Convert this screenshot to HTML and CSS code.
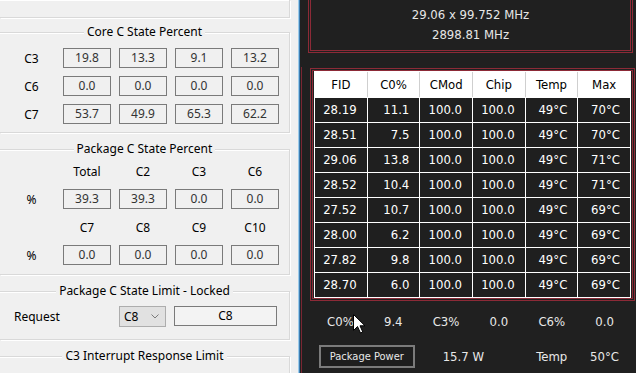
FILE: index.html
```html
<!DOCTYPE html>
<html>
<head>
<meta charset="utf-8">
<link rel="stylesheet" href="styles.css">
</head>
<body>
<div class="app">
  <div class="left">
    <div class="group group-top"></div>

    <div class="group core">
      <div class="gtitle">Core C State Percent</div>
      <div class="rows core-rows">
        <div class="vrow"><span class="lbl">C3</span><span class="box">19.8</span><span class="box">13.3</span><span class="box">9.1</span><span class="box">13.2</span></div>
        <div class="vrow"><span class="lbl">C6</span><span class="box">0.0</span><span class="box">0.0</span><span class="box">0.0</span><span class="box">0.0</span></div>
        <div class="vrow"><span class="lbl">C7</span><span class="box">53.7</span><span class="box">49.9</span><span class="box">65.3</span><span class="box">62.2</span></div>
      </div>
    </div>

    <div class="group pkg">
      <div class="gtitle">Package C State Percent</div>
      <div class="rows pkg-rows">
        <div class="hrow"><span class="lbl"></span><span class="hl">Total</span><span class="hl">C2</span><span class="hl">C3</span><span class="hl">C6</span></div>
        <div class="vrow sp9"><span class="lbl">%</span><span class="box">39.3</span><span class="box">39.3</span><span class="box">0.0</span><span class="box">0.0</span></div>
        <div class="hrow sp11"><span class="lbl"></span><span class="hl">C7</span><span class="hl">C8</span><span class="hl">C9</span><span class="hl">C10</span></div>
        <div class="vrow sp9"><span class="lbl">%</span><span class="box">0.0</span><span class="box">0.0</span><span class="box">0.0</span><span class="box">0.0</span></div>
      </div>
    </div>

    <div class="group limit">
      <div class="gtitle">Package C State Limit - Locked</div>
      <div class="rows limit-rows">
        <div class="lrow">
          <span class="req">Request</span>
          <span class="sel"><span>C8</span><svg class="chev" width="8" height="5" viewBox="0 0 8 5"><polyline points="0.5,0.5 4,4 7.5,0.5" fill="none" stroke="#7a7a7a" stroke-width="1"/></svg></span>
          <span class="tb">C8</span>
        </div>
      </div>
    </div>

    <div class="group irq">
      <div class="gtitle">C3 Interrupt Response Limit</div>
    </div>
  </div>

  <div class="sep"></div>

  <div class="right">
    <div class="freq">
      <div>29.06 x 99.752 MHz</div>
      <div>2898.81 MHz</div>
    </div>
    <div class="lower">
      <div class="tbox">
        <div class="grid">
          <div class="th">FID</div><div class="th">C0%</div><div class="th">CMod</div><div class="th">Chip</div><div class="th">Temp</div><div class="th last">Max</div>
          <div class="td">28.19</div><div class="td">11.1</div><div class="td">100.0</div><div class="td">100.0</div><div class="td">49°C</div><div class="td">70°C</div>
          <div class="td">28.51</div><div class="td">7.5</div><div class="td">100.0</div><div class="td">100.0</div><div class="td">49°C</div><div class="td">70°C</div>
          <div class="td">29.06</div><div class="td">13.8</div><div class="td">100.0</div><div class="td">100.0</div><div class="td">49°C</div><div class="td">71°C</div>
          <div class="td">28.52</div><div class="td">10.4</div><div class="td">100.0</div><div class="td">100.0</div><div class="td">49°C</div><div class="td">71°C</div>
          <div class="td">27.52</div><div class="td">10.7</div><div class="td">100.0</div><div class="td">100.0</div><div class="td">49°C</div><div class="td">69°C</div>
          <div class="td">28.00</div><div class="td">6.2</div><div class="td">100.0</div><div class="td">100.0</div><div class="td">49°C</div><div class="td">69°C</div>
          <div class="td">27.82</div><div class="td">9.8</div><div class="td">100.0</div><div class="td">100.0</div><div class="td">49°C</div><div class="td">69°C</div>
          <div class="td">28.70</div><div class="td">6.0</div><div class="td">100.0</div><div class="td">100.0</div><div class="td">49°C</div><div class="td">69°C</div>
        </div>
      </div>
      <div class="stats">
        <span>C0%</span><span>9.4</span><span>C3%</span><span>0.0</span><span>C6%</span><span>0.0</span>
      </div>
      <div class="btnrow">
        <span class="btn">Package Power</span>
        <span class="pw">15.7 W</span>
        <span class="tmp">Temp</span>
        <span class="tmp">50°C</span>
      </div>
    </div>
  </div>
</div>
<svg class="cursor" width="13" height="20" viewBox="0 0 13 20"><path d="M0.5,0.5 L0.5,16.5 L4.5,12.5 L7.5,19 L9.8,18 L7,11.8 L12,11.8 Z" fill="#fff" stroke="#000" stroke-width="1" stroke-linejoin="miter"/></svg>
</body>
</html>
```
FILE: styles.css
```css
* { box-sizing: border-box; }

body {
  margin: 0;
  width: 636px;
  height: 373px;
  overflow: hidden;
  background: #202020;
  position: relative;
}

.app {
  display: flex;
  height: 373px;
}

/* ---------- left (light) panel ---------- */
.left {
  width: 298px;
  flex: none;
  background: #f0f0f0;
  padding-right: 8px;
  font-family: "Noto Sans", "Liberation Sans", sans-serif;
  font-size: 12px;
  color: #000;
  overflow: hidden;
}

.group {
  border: 1px solid #d9d9d9;
  border-left: none;
  box-shadow: 1px 1px 0 #fff, inset 0 1px 0 #fff;
}

.group-top {
  height: 18px;
  border-top: none;
}

.core { margin-top: 14px; }
.pkg, .limit, .irq { margin-top: 16px; }
.irq { height: 40px; }

.gtitle {
  display: table;
  margin: -9px auto 0;
  padding: 0 3px;
  background: #f0f0f0;
  line-height: 16px;
  white-space: nowrap;
}

.rows { display: flex; flex-direction: column; }
.core-rows { padding: 8px 0; gap: 8px; }
.pkg-rows { padding: 7px 0 9px; }
.limit-rows { padding: 7px 0 13px; }

.sp9 { margin-top: 9px; }
.sp11 { margin-top: 11px; }

.vrow, .hrow {
  display: flex;
  align-items: center;
}
.vrow { height: 20px; }
.hrow { height: 16px; line-height: 16px; }

.lbl {
  width: 63px;
  text-align: center;
}

.box {
  width: 48px;
  height: 20px;
  border: 1px solid #7a7a7a;
  background: #f0f0f0;
  color: #333;
  text-align: center;
  line-height: 18px;
}
.box + .box, .hl + .hl { margin-left: 8px; }

.hl {
  width: 48px;
  text-align: center;
}

.lrow {
  display: flex;
  align-items: center;
  height: 20px;
  padding-left: 14px;
}
.req { width: 105px; }
.sel {
  width: 47px;
  height: 21px;
  border: 1px solid #adadad;
  background: #e1e1e1;
  display: flex;
  align-items: center;
  justify-content: space-between;
  padding: 0 6px 0 4px;
}
.tb {
  width: 103px;
  height: 20px;
  margin-left: 8px;
  border: 1px solid #7a7a7a;
  background: #f3f3f3;
  text-align: center;
  line-height: 18px;
}

/* ---------- separator ---------- */
.sep {
  width: 2px;
  flex: none;
  background: linear-gradient(to right, #9ccbea 0 1px, #3f7fb3 1px 2px);
}

/* ---------- right (dark) panel ---------- */
.right {
  flex: 1;
  display: flex;
  flex-direction: column;
  background: #202020;
  font-family: "DejaVu Sans Condensed", "Liberation Sans", sans-serif;
  font-size: 13px;
  color: #f2f2f2;
  overflow: hidden;
}

.freq {
  margin: -3px 3px 0 8px;
  border: 3px double #8c2a37;
  padding: 5px 0;
  text-align: center;
  line-height: 20px;
  color: #e6e6e6;
}

.lower {
  flex: 1;
  margin: 14px 0 0 1px;
  border-left: 1px solid #7a2632;
  padding-left: 8px;
}

.tbox {
  margin-top: 1px;
  width: 325px;
  border: 3px double #8c2a37;
  padding: 0 1px;
}

.grid {
  display: grid;
  grid-template-columns: repeat(6, 1fr);
  grid-template-rows: 25px repeat(8, 24px);
  gap: 1px;
  padding: 1px;
  background: #fff;
}

.th {
  background: #fff;
  color: #000;
  text-align: center;
  line-height: 25px;
  box-shadow: 1px 0 0 #cfcfcf;
}
.th.last { box-shadow: none; }

.td {
  background: #1f1f1f;
  color: #fff;
  text-align: right;
  padding-right: 10px;
  line-height: 24px;
}

.stats {
  display: grid;
  grid-template-columns: repeat(6, 1fr);
  width: 317px;
  margin: 11px 0 0 4px;
  line-height: 20px;
  text-align: center;
  color: #e8e8e8;
}

.btnrow {
  display: grid;
  grid-template-columns: repeat(6, 1fr);
  width: 317px;
  height: 23px;
  margin: 13px 0 0 4px;
  align-items: center;
  color: #e8e8e8;
}

.btn {
  grid-column: 1 / 3;
  justify-self: center;
  width: 96px;
  height: 23px;
  border: 2px solid #7b7b7b;
  background: #1e1e1e;
  font-size: 11px;
  line-height: 19px;
  text-align: center;
  white-space: nowrap;
}

.pw {
  grid-column: 3 / 5;
  padding-left: 23px;
}

.tmp { text-align: center; }

.cursor {
  position: absolute;
  left: 353px;
  top: 314px;
}
```
